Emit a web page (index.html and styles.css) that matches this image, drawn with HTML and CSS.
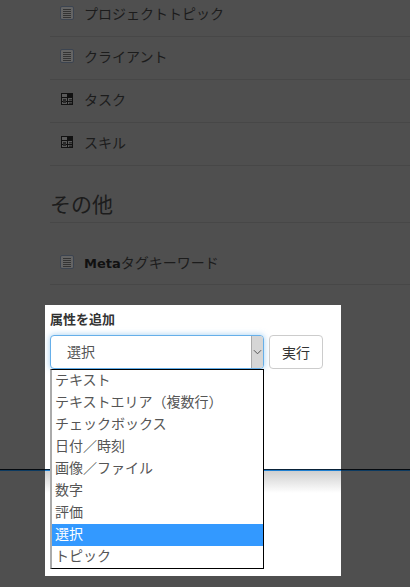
FILE: index.html
```html
<!DOCTYPE html>
<html lang="ja">
<head>
<meta charset="utf-8">
<title>属性を追加</title>
<link rel="stylesheet" href="styles.css">
</head>
<body>
<main class="page">
  <ul class="list list-top">
    <li class="row"><svg class="icon" viewBox="0 0 14 14"><use href="#doc"/></svg><span>プロジェクトトピック</span></li>
    <li class="row"><svg class="icon" viewBox="0 0 14 14"><use href="#doc"/></svg><span>クライアント</span></li>
    <li class="row"><svg class="icon" viewBox="0 0 14 14"><use href="#grid"/></svg><span>タスク</span></li>
    <li class="row"><svg class="icon" viewBox="0 0 14 14"><use href="#grid"/></svg><span>スキル</span></li>
  </ul>
  <h2 class="heading">その他</h2>
  <ul class="list">
    <li class="row"><svg class="icon" viewBox="0 0 14 14"><use href="#doc"/></svg><span><b>Meta</b>タグキーワード</span></li>
  </ul>
</main>
<footer class="footer-line"></footer>

<section class="panel">
  <div class="panel-line"></div>
  <label class="panel-title">属性を追加</label>
  <div class="controls">
    <div class="select">
      <span class="select-value">選択</span>
      <span class="select-arrow"><svg viewBox="0 0 10 6" width="9" height="6"><path d="M1 1l4 4 4-4" fill="none" stroke="#555" stroke-width="1.1"/></svg></span>
    </div>
    <button class="run">実行</button>
  </div>
  <ul class="options">
    <li>テキスト</li>
    <li>テキストエリア（複数行）</li>
    <li>チェックボックス</li>
    <li>日付／時刻</li>
    <li>画像／ファイル</li>
    <li>数字</li>
    <li>評価</li>
    <li class="selected">選択</li>
    <li>トピック</li>
  </ul>
</section>

<svg class="defs" width="0" height="0">
  <symbol id="doc" viewBox="0 0 14 14">
    <rect x="0.5" y="0.5" width="13" height="13" rx="1.5" fill="#646464" stroke="#3c4450"/>
    <path d="M3 3.5h8M3 5.5h8M3 7.5h8M3 9.5h8M3 11.5h8" stroke="#333" stroke-width="1"/>
  </symbol>
  <symbol id="grid" viewBox="0 0 14 14">
    <rect x="1.5" y="1.5" width="11" height="11" fill="#5a5a5a" stroke="#111"/>
    <path d="M1 5.5h12M7.5 1v12M8 9.5h5M2 9.5h5" stroke="#111"/>
    <rect x="8" y="2" width="5" height="3" fill="#111"/>
    <rect x="3" y="7" width="3" height="4" fill="#2a2a2a"/>
    <rect x="9" y="7" width="3" height="1.5" fill="#2a2a2a"/>
    <rect x="9" y="10.5" width="3" height="1.5" fill="#2a2a2a"/>
  </symbol>
</svg>
</body>
</html>
```
FILE: styles.css
```css
* { box-sizing: border-box; }
html, body { margin: 0; padding: 0; }
body {
  width: 410px;
  height: 587px;
  overflow: hidden;
  position: relative;
  background: #4f4f4f;
  font-family: "Liberation Sans", "Noto Sans CJK JP", sans-serif;
  color: #1c1c1c;
}
.page { height: 469px; padding: 0 0 0 50px; overflow: hidden; }
.list { list-style: none; margin: 0; padding: 0; }
.list-top { margin-top: -6px; }
.row {
  display: flex;
  align-items: center;
  gap: 10px;
  height: 43px;
  padding: 0 0 4px 10px;
  border-bottom: 1px solid #474747;
  font-size: 14px;
}
.icon { width: 14px; height: 14px; flex: none; }
.row b { font-family: "DejaVu Sans", sans-serif; font-size: 13px; font-weight: 700; color: #111; }
.heading {
  margin: 21px 0 0;
  height: 36px;
  padding-top: 4px;
  font-size: 21px;
  line-height: 28px;
  font-weight: 400;
  border-bottom: 1px solid #474747;
}
.heading + .list { margin-top: 19px; }
.heading + .list .row { padding-bottom: 3px; }
.footer-line {
  height: 2px;
  background: #0c3a60;
  border-top: 1px solid #05090e;
}
.panel {
  position: absolute;
  left: 45px;
  top: 305px;
  width: 296px;
  height: 271px;
  background: #fff;
  padding: 7px 5px 0;
}
.panel-line {
  position: absolute;
  left: 0; right: 0;
  top: 164px;
  height: 24px;
  border-top: 1px solid #0a2238;
  background: linear-gradient(#1f7fd0 1px, #cfcfcf 1px, #fff);
}
.panel-title {
  display: block;
  position: relative;
  font-size: 13px;
  font-weight: 700;
  line-height: 16px;
  color: #333;
}
.controls { display: flex; gap: 5px; margin-top: 7px; position: relative; }
.select {
  width: 214px;
  height: 34px;
  display: flex;
  justify-content: space-between;
  border: 1px solid #66afe9;
  border-radius: 4px;
  box-shadow: 0 0 6px rgba(102,175,233,.6);
  background: #fff;
  overflow: hidden;
}
.select-value { font-size: 14px; line-height: 32px; padding-left: 16px; color: #555; }
.select-arrow {
  width: 12px;
  background: #d6d6d6;
  border-left: 1px solid #aaa;
  display: flex;
  align-items: center;
  justify-content: center;
}
.run {
  width: 54px;
  height: 34px;
  border: 1px solid #ccc;
  border-radius: 4px;
  background: #fff;
  font: 14px "Liberation Sans", "Noto Sans CJK JP", sans-serif;
  color: #333;
  padding: 0;
}
.options {
  position: absolute;
  left: 5px;
  top: 64px;
  width: 214px;
  height: 200px;
  list-style: none;
  margin: 0;
  padding: 0 0 0 1px;
  background: #fff;
  border: 1px solid #000;
  border-left: 2px solid #aaa;
}
.options li {
  height: 22px;
  line-height: 20px;
  font-size: 14px;
  padding-left: 2px;
  color: #555;
}
.options .selected { background: #3399ff; color: #fff; margin-left: -1px; padding-left: 3px; }
.defs { position: absolute; }
```
